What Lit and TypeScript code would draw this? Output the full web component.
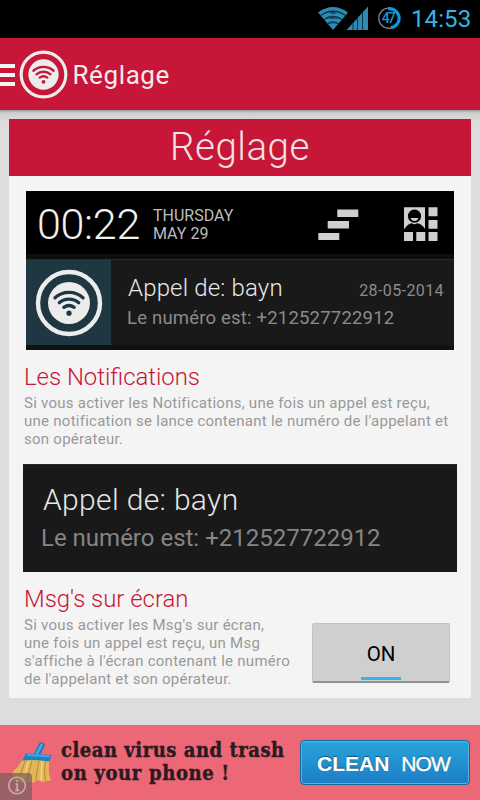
import { LitElement, html, css, svg } from "lit";
import { customElement, property } from "lit/decorators.js";

@customElement("wifi-badge")
class WifiBadge extends LitElement {
  @property() ink = "#c71637";
  static styles = css`
    :host { display: block; flex: none; }
    svg { display: block; width: 100%; height: 100%; }
  `;
  render() {
    const arc = (d: string) => svg`<path d=${d} fill="none" stroke=${this.ink} stroke-width="3.3" stroke-linecap="round" />`;
    return html`<svg viewBox="0 0 68 68">
      <circle cx="34" cy="34" r="31" fill="none" stroke="#ececec" stroke-width="4.4" />
      <circle cx="34" cy="34" r="21" fill="#ececec" />
      ${arc("M20 28.8A21 21 0 0 1 48 28.8")}
      ${arc("M24.3 33.7A15 15 0 0 1 43.7 33.7")}
      ${arc("M28.8 38.3A9 9 0 0 1 39.2 38.3")}
      <circle cx="34" cy="44.2" r="2.6" fill=${this.ink} />
    </svg>`;
  }
}

@customElement("status-bar")
class StatusBar extends LitElement {
  static styles = css`
    :host { display: flex; height: 38px; background: #000; justify-content: flex-end; padding-right: 9px; box-sizing: border-box; }
    svg { display: block; flex: none; }
    .num { font: 500 14px Roboto, sans-serif; fill: #1795cf; }
    .clock { width: 60px; margin-left: 10px; font: 400 24px/39px Roboto, sans-serif; color: #33b5e5; white-space: nowrap; letter-spacing: 0.1px; }
  `;
  render() {
    return html`
      <svg width="84" height="38" viewBox="317 0 84 38">
        <path d="M318 12.500Q333 1.500 348 12.500L333 30Z" fill="#2c8ab3" />
        <path d="M320.500 15.500Q333 7 345.500 15.500M324 19.500Q333 13.500 342 19.500M327.500 24Q333 20 338.500 24" fill="none" stroke="#0b3142" stroke-width="1.300" />
        <path d="M330.500 12h5v2h-5zM329 17h8v2h-8zM330.500 21.500h5v2h-5z" fill="#14506c" />
        <path d="M346.500 30L368 6.500V30Z" fill="#2c8ab3" />
        <path d="M353 22v8M357.500 18v12M362.500 13v17" stroke="#0b3142" stroke-width="1" />
        <circle cx="389" cy="18.200" r="10.200" fill="none" stroke="#8a8a8a" stroke-width="1.200" />
        <path d="M388 8.700A9.500 9.500 0 0 1 391 27.700" fill="none" stroke="#0d99d8" stroke-width="3.200" />
        <text class="num" x="381.700" y="23" textLength="14">47</text>
      </svg>
      <div class="clock">14:53</div>`;
  }
}

@customElement("app-header")
class AppHeader extends LitElement {
  static styles = css`
    :host { display: flex; align-items: center; height: 72px; background: #c71637; box-sizing: border-box; }
    .menu { width: 15px; display: grid; gap: 5px; padding-top: 2px; }
    .menu i { height: 4px; background: #f6f3f4; }
    wifi-badge { width: 49px; height: 49px; margin-left: 3.5px; }
    .title { font: 400 26px/72px Roboto, sans-serif; color: #f3e9eb; margin-left: 5px; padding-top: 1px; letter-spacing: 0.6px; }
  `;
  render() {
    return html`<div class="menu"><i></i><i></i><i></i></div>
      <wifi-badge></wifi-badge>
      <div class="title">Réglage</div>`;
  }
}

@customElement("notification-preview")
class NotificationPreview extends LitElement {
  static styles = css`
    :host { display: block; height: 159px; background: #000; font-family: Roboto, sans-serif; overflow: hidden; white-space: nowrap; }
    .top { display: flex; height: 63px; }
    .time { font-size: 43px; font-weight: 300; line-height: 67px; color: #f0f0f0; margin-left: 11px; width: 116px; letter-spacing: -0.3px; }
    .date { font-size: 16px; line-height: 18px; color: #bdbdbd; padding-top: 16px; width: 165px; }
    .top svg { display: block; }
    .strip { height: 5px; background: #0d0d0c; border-bottom: 1px solid #292d2d; }
    .row { display: flex; height: 85px; background: #191919; }
    .tile { width: 85px; height: 85px; background: #1e3741; display: grid; place-items: center; }
    wifi-badge { width: 68px; height: 68px; }
    .body { flex: 1; padding: 11px 10px 0 16px; }
    .line { display: flex; justify-content: space-between; height: 34px; }
    .name { font-size: 24px; font-weight: 300; line-height: 34px; color: #e8e8e8; margin-left: 1px; letter-spacing: 0.16px; }
    .day { font-size: 16px; line-height: 40px; color: #8b8b8b; letter-spacing: 0.4px; }
    .num { font-size: 18.500px; line-height: 27px; color: #8b8b8b; letter-spacing: 0.2px; }
    .end { height: 5px; background: #101112; }
  `;
  render() {
    return html`
      <div class="top">
        <div class="time">00:22</div>
        <div class="date">THURSDAY<br />MAY 29</div>
        <svg width="120" height="63" viewBox="318 191 120 63">
          <path d="M337.300 209.500h21v7.500h-21zM327.700 221h21.300v7.500h-21.300zM318.300 233h21v7h-21z" fill="#cfcfcf" />
          <path d="M404 207.300h21v21.500h-21zM428.500 207.300h9v9h-9zM428.500 220h9v8.800h-9zM404 232h9v9h-9zM416.300 232h9v9h-9zM428.500 232h9v9h-9z" fill="#cfcfcf" />
          <path d="M404.500 229Q407.500 224 412 223.300Q414.500 225 417 223.300Q422 224 425 229Z" fill="#000" />
          <circle cx="414.500" cy="216.200" r="6.600" fill="#000" />
          <path d="M410.500 218h8q-1 3-4 3t-4-3z" fill="#cfcfcf" />
        </svg>
      </div>
      <div class="strip"></div>
      <div class="row">
        <div class="tile"><wifi-badge ink="#1e3741"></wifi-badge></div>
        <div class="body">
          <div class="line"><span class="name">Appel de: bayn</span><span class="day">28-05-2014</span></div>
          <div class="num">Le numéro est: +212527722912</div>
        </div>
      </div>
      <div class="end"></div>`;
  }
}

@customElement("toast-preview")
class ToastPreview extends LitElement {
  static styles = css`
    :host { display: block; height: 108px; box-sizing: border-box; background: #191919; border-top: 1px solid #292929; padding: 14px 0 0 18px; font-family: Roboto, sans-serif; white-space: nowrap; }
    .name { font-size: 30px; font-weight: 300; line-height: 42px; color: #e6e6e6; margin-left: 2px; letter-spacing: 0.35px; }
    .num { font-size: 24px; line-height: 34px; color: #858585; }
  `;
  render() {
    return html`<div class="name">Appel de: bayn</div>
      <div class="num">Le numéro est: +212527722912</div>`;
  }
}

@customElement("ad-banner")
class AdBanner extends LitElement {
  static styles = css`
    :host { display: flex; height: 75px; background: #ec6876; position: relative; overflow: hidden; }
    .broom { display: block; width: 61px; height: 75px; flex: none; }
    .copy { width: 239px; padding-top: 14px; font: bold 20px/23px "DejaVu Serif Condensed", "DejaVu Serif", serif; font-stretch: condensed; color: #2b1a1f; white-space: nowrap; -webkit-text-stroke: 0.4px #2b1a1f; }
    .one { letter-spacing: 0.52px; }
    .two { letter-spacing: 0.66px; }
    .cta { width: 170px; height: 45px; margin-top: 15px; box-sizing: border-box; border: 1px solid #12679f; border-radius: 4px; background: linear-gradient(#27a5da, #1d7dc6); box-shadow: inset 0 0 0 1px #55b4df; display: flex; align-items: center; gap: 12px; padding: 2px 0 0 16px; font: bold 21px "Liberation Sans", sans-serif; color: #fff; text-shadow: 0 -1px 1px #15557f; white-space: nowrap; }
    .light { font-weight: 400; letter-spacing: -0.9px; -webkit-text-stroke: 0.4px #fff; }
    .info { position: absolute; left: 0; bottom: 0; width: 32px; height: 27px; background: rgba(118, 92, 94, 0.7); border-top-right-radius: 4px; }
    .info svg { display: block; }
  `;
  render() {
    return html`
      <svg class="broom" viewBox="0 725 61 75">
        <path d="M22.500 759Q19 767 12.500 772L15 781L22 783L28 781.500L33 783L38 780L42 782L51 780.500Q47.500 772 49.500 760Z" fill="#e0b656" />
        <path d="M25 761Q22 772 17 781M32 761Q28 773 27 782M39 761Q36 775 36 781M46 761Q43 773 46 781" fill="none" stroke="#b98b36" stroke-width="1" />
        <path d="M28.500 761Q26 772 22 781M42 761L41 780" fill="none" stroke="#f3d88a" stroke-width="1.300" />
        <path d="M37 754.500L41.500 745.500" stroke="#1b74b4" stroke-width="6" stroke-linecap="round" />
        <path d="M26 753.500L51.500 755L49.500 761.500Q36 759 22 760.500Z" fill="#1f80c4" />
        <path d="M37 753.500L41.500 745" stroke="#38aae8" stroke-width="3" stroke-linecap="round" />
        <path d="M27 755L50 756.500" stroke="#38aae8" stroke-width="1.800" />
      </svg>
      <div class="copy"><div class="one">clean virus and trash</div><div class="two">on your phone !</div></div>
      <div class="cta"><span>CLEAN</span><span class="light">NOW</span></div>
      <div class="info"><svg width="32" height="27" viewBox="0 0 32 27">
        <circle cx="17" cy="12.500" r="8.300" fill="none" stroke="#c9abac" stroke-width="1.600" />
        <path d="M17 7v2M15.500 11h1.700v6M15 17.300h4.300" fill="none" stroke="#c9abac" stroke-width="1.700" />
      </svg></div>`;
  }
}

@customElement("app-root")
class AppRoot extends LitElement {
  static styles = css`
    :host { display: flex; flex-direction: column; width: 480px; height: 800px; overflow: hidden; background: #ddd; font-family: Roboto, sans-serif; }
    .page { flex: 1; padding: 9px 9px 0; background: linear-gradient(#9e9e9e 0, #a4a4a4 1px, #c5c5c5 2px, #d0d0d0 4px, #ddd 12px); }
    .card { height: 579px; background: #f4f4f4; }
    h1 { margin: 0; height: 57px; background: #c71637; color: #efe2e5; font-size: 38.500px; line-height: 56px; font-weight: 300; text-align: center; letter-spacing: 0.5px; }
    notification-preview { margin: 15px 17px 0; }
    toast-preview { margin: 0 14px; }
    h2 { margin: 0 0 0 15px; height: 44px; font-size: 23.900px; font-weight: 300; line-height: 54px; color: #c71637; white-space: nowrap; }
    p { margin: 0 0 0 15px; font-size: 15px; line-height: 18px; color: #999; white-space: nowrap; letter-spacing: 0.26px; }
    .first { height: 70px; }
    .split { display: flex; }
    .split p { width: 288px; }
    .toggle { width: 138px; height: 60px; margin-top: 7px; box-sizing: border-box; border: 1px solid #c3c3c3; border-bottom: 2px solid #929292; border-radius: 2px; background: #cfcfcf; display: flex; flex-direction: column; align-items: center; padding: 0; font: 400 20.500px/60px Roboto, sans-serif; color: #000; }
    .toggle span { height: 53px; }
    .toggle i { width: 40px; height: 3px; background: #33b5e5; }
  `;
  render() {
    return html`
      <status-bar></status-bar>
      <app-header></app-header>
      <div class="page">
        <div class="card">
          <h1>Réglage</h1>
          <notification-preview></notification-preview>
          <h2>Les Notifications</h2>
          <p class="first">Si vous activer les Notifications, une fois un appel est reçu,<br />une notification se lance contenant le numéro de l'appelant et<br />son opérateur.</p>
          <toast-preview></toast-preview>
          <h2>Msg's sur écran</h2>
          <div class="split">
            <p>Si vous activer les Msg's sur écran,<br />une fois un appel est reçu, un Msg<br />s'affiche à l'écran contenant le numéro<br />de l'appelant et son opérateur.</p>
            <button class="toggle"><span>ON</span><i></i></button>
          </div>
        </div>
      </div>
      <ad-banner></ad-banner>`;
  }
}
